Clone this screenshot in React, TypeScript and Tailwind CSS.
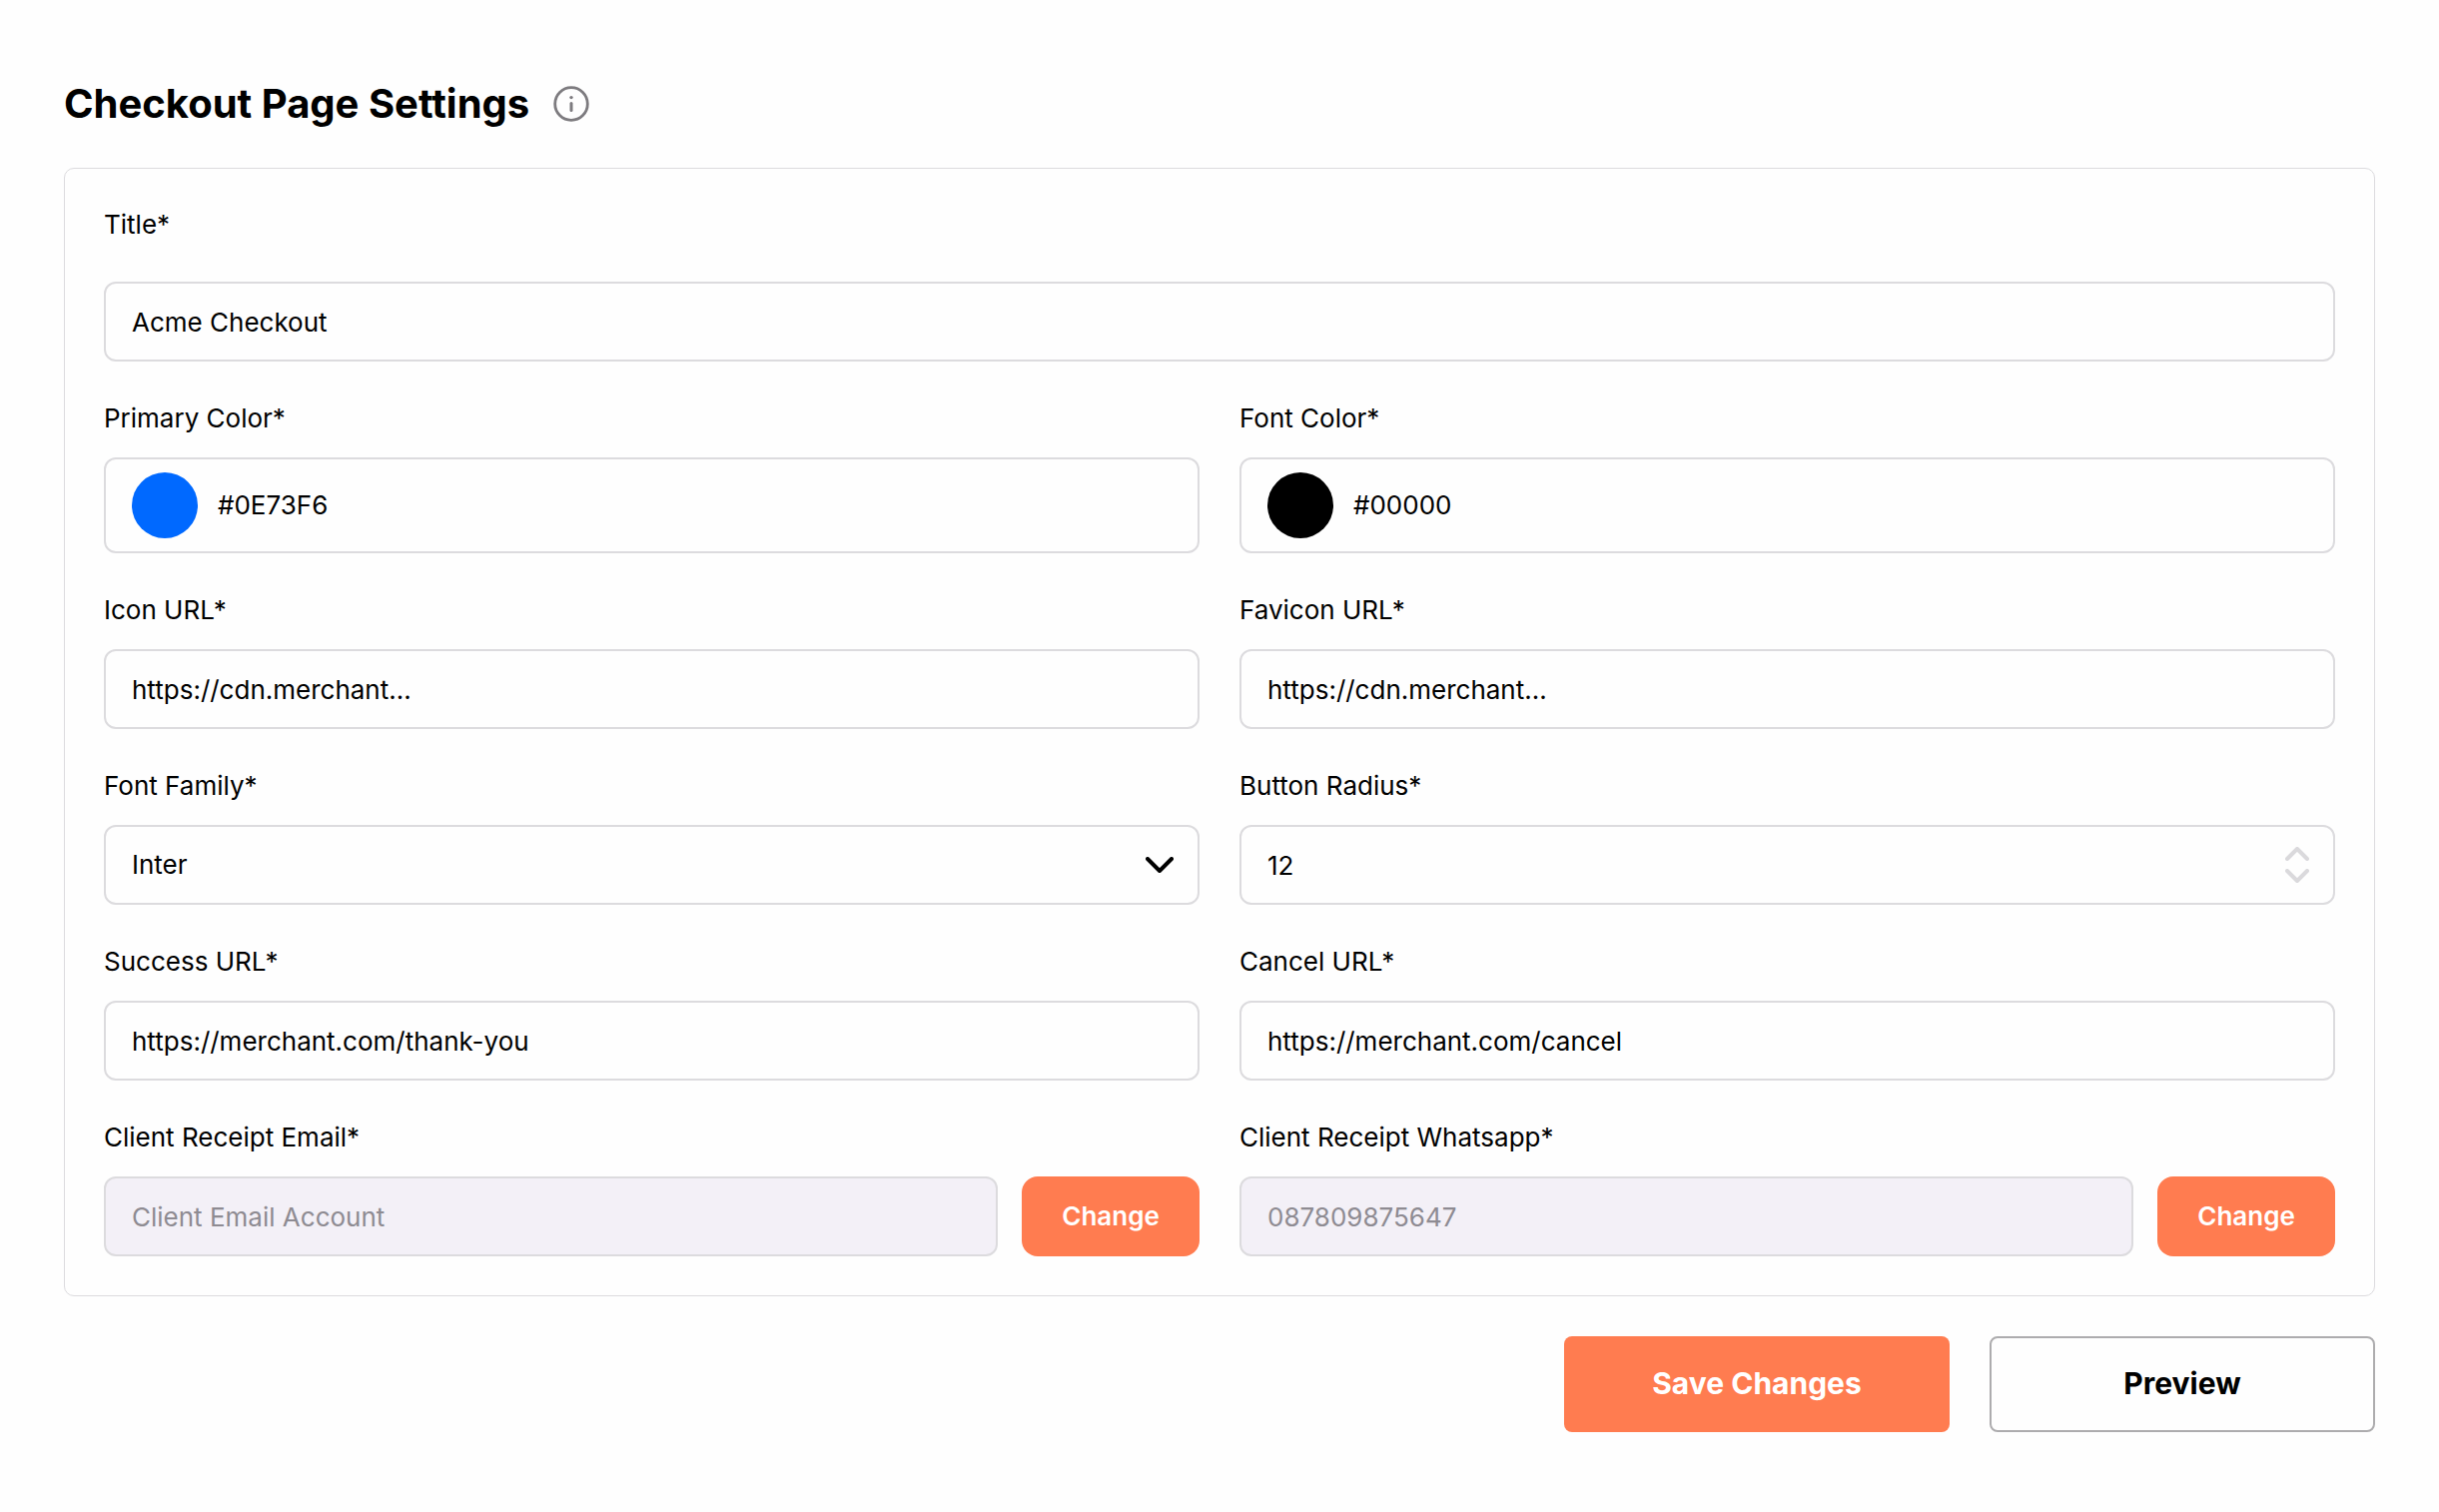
import { useId, useState } from "react";
import type { ReactNode } from "react";

const box =
  "h-20 w-full min-w-0 rounded-xl border-2 border-[#dcdbde] bg-transparent px-[26px] text-[26px] leading-8 text-black outline-none focus:border-[#ff7c50]";

function Field({
  label,
  id,
  wide,
  children,
}: {
  label: string;
  id: string;
  wide?: boolean;
  children: ReactNode;
}) {
  return (
    <div className={wide ? "col-span-2 flex flex-col gap-10" : "flex flex-col gap-[22px]"}>
      <label htmlFor={id} className="text-[26px] leading-[34px]">
        {label}*
      </label>
      {children}
    </div>
  );
}

function TextField({ label, value, wide }: { label: string; value: string; wide?: boolean }) {
  const id = useId();
  return (
    <Field label={label} id={id} wide={wide}>
      <input id={id} type="text" defaultValue={value} className={box} />
    </Field>
  );
}

function ColorField({ label, value, swatch }: { label: string; value: string; swatch: string }) {
  const id = useId();
  return (
    <Field label={label} id={id}>
      <div className="flex h-24 items-center gap-5 rounded-xl border-2 border-[#dcdbde] px-[26px]">
        <span className={`size-[66px] shrink-0 rounded-full ${swatch}`} />
        <input
          id={id}
          type="text"
          defaultValue={value}
          className="w-full min-w-0 bg-transparent text-[26px] leading-[34px] outline-none"
        />
      </div>
    </Field>
  );
}

function SelectField({ label, options }: { label: string; options: string[] }) {
  const id = useId();
  return (
    <Field label={label} id={id}>
      <div className="relative">
        <select id={id} className={`${box} appearance-none`}>
          {options.map((o) => (
            <option key={o}>{o}</option>
          ))}
        </select>
        <svg
          aria-hidden="true"
          viewBox="0 0 28 16"
          className="pointer-events-none absolute top-8 right-[26px] h-4 w-7"
          fill="none"
          stroke="currentColor"
          strokeWidth="4"
          strokeLinecap="round"
          strokeLinejoin="round"
        >
          <path d="M2 2l12 12L26 2" />
        </svg>
      </div>
    </Field>
  );
}

function NumberField({ label, initial }: { label: string; initial: number }) {
  const id = useId();
  const [value, setValue] = useState(initial);
  const steps = [
    { name: "Increase", by: 1, d: "M2 12L12 2l10 10" },
    { name: "Decrease", by: -1, d: "M2 2l10 10L22 2" },
  ];
  return (
    <Field label={label} id={id}>
      <div className="relative">
        <input
          id={id}
          type="number"
          value={value}
          onChange={(e) => setValue(Number(e.target.value))}
          className={`${box} [appearance:textfield] [&::-webkit-inner-spin-button]:appearance-none`}
        />
        <div className="absolute inset-y-0 right-[26px] flex flex-col justify-center gap-2">
          {steps.map((s) => (
            <button
              key={s.name}
              type="button"
              aria-label={`${s.name} ${label}`}
              onClick={() => setValue(value + s.by)}
              className="text-[#dad9dc]"
            >
              <svg
                viewBox="0 0 24 14"
                className="h-3.5 w-6"
                fill="none"
                stroke="currentColor"
                strokeWidth="4"
                strokeLinecap="round"
                strokeLinejoin="round"
              >
                <path d={s.d} />
              </svg>
            </button>
          ))}
        </div>
      </div>
    </Field>
  );
}

function LockedField({ label, placeholder }: { label: string; placeholder: string }) {
  const id = useId();
  return (
    <Field label={label} id={id}>
      <div className="flex gap-6">
        <input
          id={id}
          type="text"
          readOnly
          placeholder={placeholder}
          className="h-20 w-full min-w-0 rounded-xl border-2 border-[#dcdbde] bg-[#f3f0f7] px-[26px] text-[26px] leading-8 outline-none placeholder:text-[#8e8b92]"
        />
        <button
          type="button"
          className="h-20 w-[178px] shrink-0 rounded-2xl bg-[#ff7c50] text-[26px] leading-[34px] font-semibold text-white"
        >
          Change
        </button>
      </div>
    </Field>
  );
}

export default function App() {
  return (
    <main className="min-h-screen bg-[#fefefe] px-16 py-20 font-['Inter',sans-serif] text-black">
      <form onSubmit={(e) => e.preventDefault()}>
        <header className="flex items-center gap-6">
          <h1 className="text-[40px] leading-12 font-bold">Checkout Page Settings</h1>
          <button type="button" aria-label="About these settings" className="text-[#7d7b7f]">
            <svg viewBox="0 0 36 36" className="size-9" fill="none" stroke="currentColor" strokeLinecap="round">
              <circle cx="18" cy="18" r="16.3" strokeWidth="2.8" />
              <path d="M18 17.5v7" strokeWidth="3" />
              <circle cx="18" cy="11.6" r="1.7" fill="currentColor" stroke="none" />
            </svg>
          </button>
        </header>

        <section className="mt-10 grid grid-cols-2 gap-10 rounded-[10px] border border-[#dcdbde] p-[39px]">
          <TextField label="Title" value="Acme Checkout" wide />
          <ColorField label="Primary Color" value="#0E73F6" swatch="bg-[#0069ff]" />
          <ColorField label="Font Color" value="#00000" swatch="bg-black" />
          <TextField label="Icon URL" value="https://cdn.merchant..." />
          <TextField label="Favicon URL" value="https://cdn.merchant..." />
          <SelectField label="Font Family" options={["Inter", "Roboto", "Lato"]} />
          <NumberField label="Button Radius" initial={12} />
          <TextField label="Success URL" value="https://merchant.com/thank-you" />
          <TextField label="Cancel URL" value="https://merchant.com/cancel" />
          <LockedField label="Client Receipt Email" placeholder="Client Email Account" />
          <LockedField label="Client Receipt Whatsapp" placeholder="087809875647" />
        </section>

        <footer className="mt-10 flex justify-end gap-10 text-[30px] leading-9 font-bold">
          <button type="submit" className="h-24 w-[386px] rounded-lg bg-[#ff7c50] pb-0.5 text-white">
            Save Changes
          </button>
          <button type="button" className="h-24 w-[386px] rounded-lg border-2 border-[#adacae] pb-0.5">
            Preview
          </button>
        </footer>
      </form>
    </main>
  );
}
